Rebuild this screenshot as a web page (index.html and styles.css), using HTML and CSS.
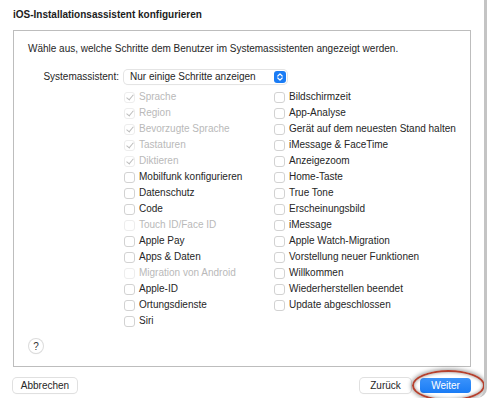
FILE: index.html
```html
<!DOCTYPE html>
<html lang="de">
<head>
    <meta charset="UTF-8">
    <title>iOS-Installationsassistent konfigurieren</title>
    <link rel="stylesheet" href="styles.css">
</head>
<body>
    <div class="window">
        <h1 class="title">iOS-Installationsassistent konfigurieren</h1>

        <section class="panel">
            <p class="intro">Wähle aus, welche Schritte dem Benutzer im Systemassistenten angezeigt werden.</p>

            <div class="form">
                <span class="mode-label">Systemassistent:</span>
                <div class="popup">
                    <span>Nur einige Schritte anzeigen</span>
                    <span class="stepper">
                        <svg width="8" height="10" viewBox="0 0 8 10"><path d="M1.8 4 L4 1.8 L6.2 4 M1.8 6 L4 8.2 L6.2 6" fill="none" stroke="#fff" stroke-width="1.2" stroke-linecap="round" stroke-linejoin="round"/></svg>
                    </span>
                </div>

                <div class="steps">
                    <ul class="col">
                        <li class="step locked checked"><span class="box"></span>Sprache</li>
                        <li class="step locked checked"><span class="box"></span>Region</li>
                        <li class="step locked checked"><span class="box"></span>Bevorzugte Sprache</li>
                        <li class="step locked checked"><span class="box"></span>Tastaturen</li>
                        <li class="step locked checked"><span class="box"></span>Diktieren</li>
                        <li class="step"><span class="box"></span>Mobilfunk konfigurieren</li>
                        <li class="step"><span class="box"></span>Datenschutz</li>
                        <li class="step"><span class="box"></span>Code</li>
                        <li class="step locked"><span class="box"></span>Touch ID/Face ID</li>
                        <li class="step"><span class="box"></span>Apple Pay</li>
                        <li class="step"><span class="box"></span>Apps &amp; Daten</li>
                        <li class="step locked"><span class="box"></span>Migration von Android</li>
                        <li class="step"><span class="box"></span>Apple-ID</li>
                        <li class="step"><span class="box"></span>Ortungsdienste</li>
                        <li class="step"><span class="box"></span>Siri</li>
                    </ul>
                    <ul class="col">
                        <li class="step"><span class="box"></span>Bildschirmzeit</li>
                        <li class="step"><span class="box"></span>App-Analyse</li>
                        <li class="step"><span class="box"></span>Gerät auf dem neuesten Stand halten</li>
                        <li class="step"><span class="box"></span>iMessage &amp; FaceTime</li>
                        <li class="step"><span class="box"></span>Anzeigezoom</li>
                        <li class="step"><span class="box"></span>Home-Taste</li>
                        <li class="step"><span class="box"></span>True Tone</li>
                        <li class="step"><span class="box"></span>Erscheinungsbild</li>
                        <li class="step"><span class="box"></span>iMessage</li>
                        <li class="step"><span class="box"></span>Apple Watch-Migration</li>
                        <li class="step"><span class="box"></span>Vorstellung neuer Funktionen</li>
                        <li class="step"><span class="box"></span>Willkommen</li>
                        <li class="step"><span class="box"></span>Wiederherstellen beendet</li>
                        <li class="step"><span class="box"></span>Update abgeschlossen</li>
                    </ul>
                </div>
            </div>

            <button class="help">?</button>
        </section>

        <footer class="actions">
            <button class="btn cancel">Abbrechen</button>
            <div class="nav">
                <button class="btn">Zurück</button>
                <div class="highlight">
                    <button class="btn primary">Weiter</button>
                </div>
            </div>
        </footer>
    </div>
</body>
</html>
```

FILE: styles.css
```css
body {
    margin: 0;
    background: #fff;
    font-family: 'Liberation Sans', Arial, sans-serif;
    font-size: 10px;
    line-height: 12px;
    color: #262626;
}

.window {
    width: 458px;
    height: 398px;
    padding: 0 13px;
    border-right: 3px solid #c4c4c4;
    border-bottom-right-radius: 10px;
    background: #fff;
    overflow: hidden;
}

.title {
    margin: 0 0 9px;
    padding-top: 9px;
    font-size: 10px;
    line-height: 12px;
    font-weight: bold;
    color: #1c1c1c;
}

.panel {
    height: 323px;
    border: 1px solid #bdbdbd;
    padding: 12px 14px 0;
    display: flex;
    flex-direction: column;
}

.intro {
    margin: 0 0 15px;
}

.form {
    display: grid;
    grid-template-columns: 96px auto;
    align-items: center;
}

.mode-label {
    text-align: right;
    padding-right: 5px;
}

.popup {
    display: flex;
    align-items: center;
    justify-content: space-between;
    width: 156px;
    height: 14px;
    padding: 0 1px 0 6px;
    border-radius: 4px;
    background: #fff;
    box-shadow: 0 0 0 1px #e4e4e4, 0 1px 1px #00000014;
}

.stepper {
    width: 12px;
    height: 12px;
    border-radius: 3px;
    background: #1a7cf5;
    display: flex;
    align-items: center;
    justify-content: center;
}

.steps {
    grid-column: 2;
    display: flex;
    margin-top: 5px;
}

.col {
    list-style: none;
    margin: 0;
    padding: 0;
    width: 150px;
}

.step {
    display: flex;
    align-items: center;
    height: 16px;
    white-space: nowrap;
}

.box {
    flex: none;
    box-sizing: border-box;
    width: 11px;
    height: 11px;
    margin-right: 4px;
    border: 1px solid #d2d2d2;
    border-radius: 3px;
    background: #fff;
    position: relative;
}

.locked {
    color: #b9b9b9;
}

.locked .box {
    border-color: #ededed;
}

.checked .box::after {
    content: "";
    position: absolute;
    left: 3px;
    top: 0;
    width: 3px;
    height: 6px;
    border: solid #bcbcbc;
    border-width: 0 1.3px 1.3px 0;
    transform: rotate(40deg);
}

.help {
    margin: auto 0 13px 1px;
    width: 14px;
    height: 14px;
    padding: 0;
    border: none;
    border-radius: 50%;
    background: #fff;
    box-shadow: 0 0 0 1px #dcdcdc, 0 1px 1px #00000022;
    font-family: inherit;
    font-size: 10px;
    color: #333;
}

.actions {
    display: flex;
    justify-content: space-between;
    align-items: center;
    margin-top: 11px;
}

.nav {
    display: flex;
    align-items: center;
    gap: 9px;
}

.btn {
    width: 51px;
    height: 15px;
    padding: 0;
    border: none;
    border-radius: 4px;
    background: #fff;
    box-shadow: 0 0 0 1px #e0e0e0, 0 1px 1px #00000018;
    font-family: inherit;
    font-size: 10px;
    color: #262626;
}

.btn.cancel {
    width: 64px;
}

.btn.primary {
    background: linear-gradient(#3b93fb, #1a7cf5);
    color: #fff;
    box-shadow: none;
}

.highlight {
    position: relative;
    display: flex;
}

.highlight::before {
    content: "";
    position: absolute;
    left: -8px;
    right: -14px;
    top: -8px;
    bottom: -8px;
    border: 2px solid #b4412e;
    border-radius: 50%;
    box-shadow: 0 0 4px 1px #00000066, inset 0 0 3px 1px #00000044;
}
```
